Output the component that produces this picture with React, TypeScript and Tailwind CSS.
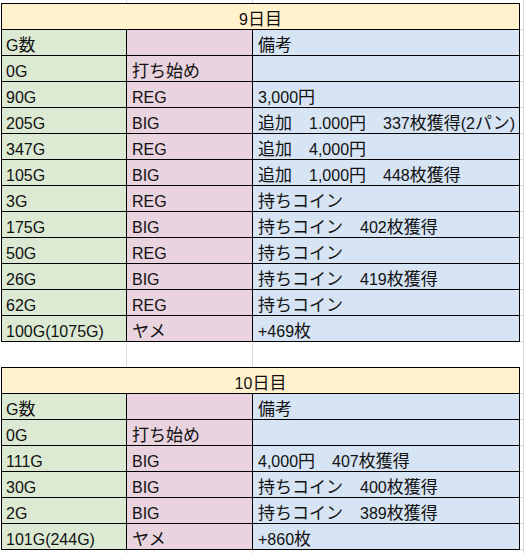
import React from "react";

const rows1: string[][] = [
  ["G数", "", "備考"],
  ["0G", "打ち始め", ""],
  ["90G", "REG", "3,000円"],
  ["205G", "BIG", "追加　1.000円　337枚獲得(2パン)"],
  ["347G", "REG", "追加　4,000円"],
  ["105G", "BIG", "追加　1,000円　448枚獲得"],
  ["3G", "REG", "持ちコイン"],
  ["175G", "BIG", "持ちコイン　402枚獲得"],
  ["50G", "REG", "持ちコイン"],
  ["26G", "BIG", "持ちコイン　419枚獲得"],
  ["62G", "REG", "持ちコイン"],
  ["100G(1075G)", "ヤメ", "+469枚"],
];

const rows2: string[][] = [
  ["G数", "", "備考"],
  ["0G", "打ち始め", ""],
  ["111G", "BIG", "4,000円　407枚獲得"],
  ["30G", "BIG", "持ちコイン　400枚獲得"],
  ["2G", "BIG", "持ちコイン　389枚獲得"],
  ["101G(244G)", "ヤメ", "+860枚"],
];

function T({ s }: { s: string }) {
  const parts = s.split(/([\u3000-\u9fff\uff00-\uffef]+)/).filter((p) => p.length > 0);
  return (
    <>
      {parts.map((p, i) =>
        /[\u3000-\u9fff\uff00-\uffef]/.test(p) ? (
          <span key={i} className="text-[17px]">
            {p}
          </span>
        ) : (
          <span key={i}>{p}</span>
        )
      )}
    </>
  );
}

function GridStrip({ h }: { h: string }) {
  return (
    <div className={`flex ${h}`}>
      <div className="w-[126px] border-r border-[#dadada]" />
      <div className="w-[126px] border-r border-[#dadada]" />
      <div className="w-[271px] border-r border-[#dadada]" />
    </div>
  );
}

function Title({ text }: { text: string }) {
  return (
    <div className="flex h-[27px]">
      <div className="w-[519px] border border-black bg-[#fff2cc] flex items-end justify-center leading-[18px]">
        <div className="whitespace-nowrap">
          <T s={text} />
        </div>
      </div>
      <div className="w-[4px] border-r border-b border-[#dadada]" />
    </div>
  );
}

function Row({ r }: { r: string[] }) {
  return (
    <div className="flex h-[26px]">
      <div className="w-[126px] border-l border-r border-b border-black bg-[#dcead3] flex items-end pl-[4px] leading-[18px] whitespace-nowrap">
        <div><T s={r[0]} /></div>
      </div>
      <div className="w-[126px] border-r border-b border-black bg-[#e8d3df] flex items-end pl-[5px] leading-[18px] whitespace-nowrap">
        <div><T s={r[1]} /></div>
      </div>
      <div className="w-[267px] border-r border-b border-black bg-[#d6e4f3] flex items-end pl-[5px] leading-[18px] whitespace-nowrap">
        <div><T s={r[2]} /></div>
      </div>
      <div className="w-[4px] border-r border-b border-[#dadada]" />
    </div>
  );
}

export default function App() {
  return (
    <div className="w-[526px] h-[553px] overflow-hidden bg-white pl-[1px] text-[16px] text-[#111] font-['Liberation_Sans','Noto_Sans_CJK_JP',sans-serif]">
      <GridStrip h="h-[3px]" />
      <Title text="9日目" />
      {rows1.map((r, i) => (
        <Row key={i} r={r} />
      ))}
      <GridStrip h="h-[25px]" />
      <Title text="10日目" />
      {rows2.map((r, i) => (
        <Row key={i} r={r} />
      ))}
      <GridStrip h="h-[4px]" />
    </div>
  );
}
